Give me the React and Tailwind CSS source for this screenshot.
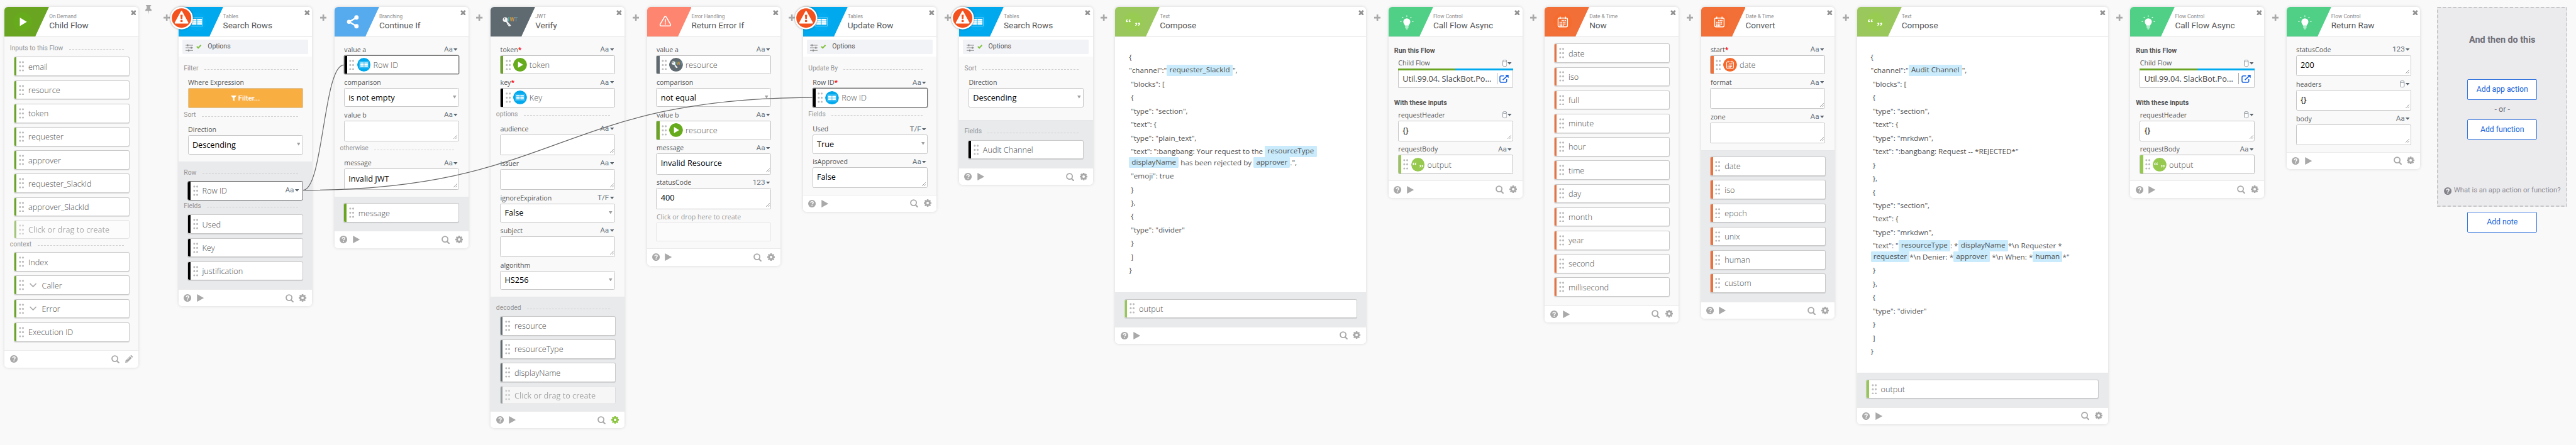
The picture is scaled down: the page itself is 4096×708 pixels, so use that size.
import React from "react";

const BAR = {
  green: "bg-[#6aa522]",
  black: "bg-black",
  slate: "bg-[#5f6a70]",
  lime: "bg-[#95c950]",
  orange: "bg-[#f27038]",
};

/* ---------- small icons ---------- */

function Dots({ className = "" }) {
  return (
    <svg viewBox="0 0 9 18" className={`h-[18px] w-[9px] shrink-0 fill-[#bcbcbc] ${className}`}>
      {[2, 9, 16].map((y) => (
        <React.Fragment key={y}>
          <circle cx="2" cy={y} r="1.65" />
          <circle cx="7" cy={y} r="1.65" />
        </React.Fragment>
      ))}
    </svg>
  );
}

function Help({ className = "h-[13px] w-[13px] text-[#a9a9a9]" }) {
  return (
    <svg viewBox="0 0 13 13" className={`shrink-0 ${className}`}>
      <circle cx="6.5" cy="6.5" r="6.5" fill="currentColor" />
      <path d="M4.4 5.1C4.5 3.7 5.4 3 6.6 3c1.2 0 2.1.7 2.1 1.8 0 1.5-2 1.5-2 3" fill="none" stroke="#fff" strokeWidth="1.5" />
      <rect x="5.8" y="8.9" width="1.7" height="1.7" fill="#fff" />
    </svg>
  );
}

function Play() {
  return (
    <svg viewBox="0 0 12 13" className="h-[13px] w-[12px] shrink-0 fill-[#a9a9a9]">
      <path d="M.3 0 12 6.5.3 13z" />
    </svg>
  );
}

function Search() {
  return (
    <svg viewBox="0 0 14 14" className="h-[14px] w-[14px] shrink-0" fill="none" stroke="#a9a9a9">
      <circle cx="6" cy="6" r="4.9" strokeWidth="1.9" />
      <path d="m9.6 9.8 3.2 3.3" strokeWidth="2.3" strokeLinecap="round" />
    </svg>
  );
}

function Gear({ active }) {
  return (
    <svg viewBox="-6.5 -6.5 13 13" className={`h-[13px] w-[13px] shrink-0 ${active ? "text-[#8ac43f]" : "text-[#a9a9a9]"}`}>
      <circle r="3.6" fill="none" stroke="currentColor" strokeWidth="2.9" />
      {[0, 45, 90, 135].map((a) => (
        <g key={a} transform={`rotate(${a})`} fill="currentColor">
          <rect x="-1.35" y="-6.5" width="2.7" height="3" />
          <rect x="-1.35" y="3.5" width="2.7" height="3" />
        </g>
      ))}
    </svg>
  );
}

function Pencil() {
  return (
    <svg viewBox="0 0 13 13" className="h-[13px] w-[13px] shrink-0 fill-[#a9a9a9]">
      <path d="M0 13l.8-3.9L8 1.9l3.1 3.1-7.2 7.2z" />
      <path d="M8.8 1.1 9.6.3c.4-.4.9-.4 1.3 0l1.8 1.8c.4.4.4.9 0 1.3l-.8.8z" />
      <path d="M1.6 9.6 3.4 11.4M3.2 8.4l5-5" stroke="#fff" strokeWidth=".8" fill="none" />
    </svg>
  );
}

function Close() {
  return (
    <svg viewBox="0 0 10 10" className="h-[9.4px] w-[9.4px] shrink-0" stroke="#919191" strokeWidth="3">
      <path d="m1.2 1.2 7.6 7.6M8.8 1.2 1.2 8.8" />
    </svg>
  );
}

function Plus() {
  return (
    <svg viewBox="0 0 11 11" className="h-[11px] w-[11px] shrink-0" stroke="#a9a9a9" strokeWidth="2.8">
      <path d="M5.5 0v11M0 5.5h11" />
    </svg>
  );
}

function Pin() {
  return (
    <svg viewBox="0 0 11 16" className="h-[16px] w-[11px] shrink-0 fill-[#a9a9a9]">
      <path d="M1.8 0h7.4c.6 0 .9.4.9.8s-.3.8-.9.8h-.7v4.3C10 6.6 11 7.9 11 9.8H6.2L5.5 16l-.7-6.2H0c0-1.9 1-3.2 2.5-3.9V1.6h-.7c-.6 0-.9-.4-.9-.8s.3-.8.9-.8z" />
    </svg>
  );
}

function Sliders() {
  return (
    <svg viewBox="0 0 13 13" className="h-[13px] w-[13px] shrink-0 fill-[#8c8c8c]">
      <path d="M0 1.7h13v1H0zM0 6h13v1H0zM0 10.5h13v1H0z" />
      <path d="M2.5.6h2.2v3.2H2.5zM8.8 4.900H11v3.200H8.800zM4.300 9.400h2.200v3.200H4.300z" />
    </svg>
  );
}

function Check() {
  return (
    <svg viewBox="0 0 9 7" className="h-[7px] w-[9px] shrink-0" fill="none" stroke="#83c341" strokeWidth="2.2">
      <path d="m.9 3.3 2.5 2.3L8.1.9" />
    </svg>
  );
}

function Caret() {
  return (
    <svg viewBox="0 0 7 4" className="h-[4px] w-[7px] shrink-0 fill-[#59626b]">
      <path d="M0 0h7L3.5 4z" />
    </svg>
  );
}

function WarningBadge() {
  return (
    <svg viewBox="0 0 40 40" className="absolute -top-[0.5px] -left-[14.5px] z-10 h-[40px] w-[40px] drop-shadow-[0_1px_1.5px_rgba(0,0,0,0.4)]">
      <circle cx="20" cy="20" r="19.3" fill="#fff" />
      <circle cx="20" cy="20" r="16.6" fill="#f3511d" />
      <path d="M20 8.9 30.7 28.3H9.3z" fill="#fff" stroke="#fff" strokeWidth="2.2" strokeLinejoin="round" />
      <path d="M18.1 14.5h3.8l-.6 7.6h-2.6z" fill="#f3511d" />
      <rect x="18.2" y="23.6" width="3.6" height="3.3" fill="#f3511d" />
    </svg>
  );
}

/* Glyphs are drawn around (0,0) so they serve both the header and the round chips. */
function Glyph({ kind }) {
  switch (kind) {
    case "play":
      return <path d="M-4.7-7.2 7.3 0-4.7 7.2z" fill="#fff" />;
    case "table":
      return (
        <g>
          <rect x="-10.2" y="-7.3" width="20.4" height="14.6" fill="none" stroke="#9adcf8" strokeWidth=".8" />
          {[-5.2, -1.6, 2].map((y) => (
            <g key={y} fill="#fff">
              <rect x="-8.8" y={y} width="8.3" height="2.9" />
              <rect x=".5" y={y} width="8.3" height="2.9" />
            </g>
          ))}
        </g>
      );
    case "share":
      return (
        <g fill="#fff" stroke="#fff">
          <path d="M6.5-7.5-6 0 6.5 7.5" fill="none" strokeWidth="2.6" />
          <circle cx="-6.5" cy="0" r="3.4" strokeWidth="0" />
          <circle cx="6.3" cy="-7.5" r="3.7" strokeWidth="0" />
          <circle cx="6.3" cy="7.5" r="3.7" strokeWidth="0" />
        </g>
      );
    case "jwt":
      return (
        <g>
          <text x="-4" y="-.5" fontSize="9.5" fontWeight="500" fontFamily="Roboto, sans-serif">
            <tspan fill="#3fc6c0">J</tspan>
            <tspan fill="#d99a45">W</tspan>
            <tspan fill="#5f9bb5">T</tspan>
          </text>
          <path d="M-5.5-2.5 3 7M-.8 2.7l-1.8 1.7M1.5 5.3-.3 7" stroke="#f3f3f3" strokeWidth="2.4" fill="none" />
          <circle cx="-6" cy="-3.8" r="4.1" fill="#f3f3f3" />
          <circle cx="-7.2" cy="-5" r="1.1" fill="#5f6a70" />
        </g>
      );
    case "alert":
      return (
        <g fill="none" stroke="#fff" strokeWidth="1.7" strokeLinejoin="round" strokeLinecap="round">
          <path d="M-1.6-8.2a1.9 1.9 0 0 1 3.2 0L8.8 4.2A1.9 1.9 0 0 1 7.2 7H-7.2a1.9 1.9 0 0 1-1.6-2.8z" />
          <path d="M0-4V.8" />
          <path d="M0 3.5v.1" strokeWidth="2" />
        </g>
      );
    case "quote":
      return (
        <g fill="#fff">
          {[-11, -6.2].map((x) => (
            <path key={x} transform={`translate(${x} -2.2) scale(.9)`} d="M1.8-3.1c-2 .5-3.6 2-3.6 4.1 0 1.300.8 2.100 1.900 2.100 1 0 1.800-.7 1.800-1.700s-.7-1.600-1.500-1.700c.1-.9.7-1.700 1.700-2.200z" />
          ))}
          {[5.2, 10].map((x) => (
            <path key={x} transform={`translate(${x} 4) rotate(180) scale(.9)`} d="M1.8-3.1c-2 .5-3.6 2-3.6 4.1 0 1.300.8 2.100 1.900 2.100 1 0 1.800-.7 1.800-1.700s-.7-1.600-1.500-1.700c.1-.9.7-1.700 1.700-2.200z" />
          ))}
        </g>
      );
    case "bulb":
      return (
        <g>
          <path d="M0-6a6 6 0 0 1 6 6c0 2.8-2.4 4-2.8 6.5h-6.4C-3.6 4-6 2.8-6 0a6 6 0 0 1 6-6z" fill="#fff" />
          <path d="M-2.8 8h5.6M-2.8 10h5.6M-1.5 12h3" stroke="#fff" strokeWidth="1.1" />
          <path d="M0-8.5V-11M6-6.5l1.8-1.8M-6-6.5l-1.8-1.8M9-.5h2.3M-9-.5h-2.3" stroke="#fff" strokeWidth="1.1" />
        </g>
      );
    case "calendar":
      return (
        <g fill="none" stroke="#fff">
          <rect x="-8" y="-6.5" width="16" height="15" rx="2" strokeWidth="1.5" />
          <path d="M-4.5-9v4M4.5-9v4" strokeWidth="1.6" />
          <path d="M-2-2.2h7.5M-5.5.8h11M-5.5 3.8h11M-5.5 6.200h7" strokeWidth="1.9" strokeDasharray="1.9 .8" />
        </g>
      );
    default:
      return null;
  }
}

const CHIP = {
  table: "#00a9ee",
  play: "#66ab1b",
  jwt: "#5f6a70",
  quote: "#96c94e",
  calendar: "#f4692b",
};

function Chip({ kind }) {
  return (
    <svg viewBox="-16 -16 32 32" className="h-[23.4px] w-[23.4px] shrink-0 overflow-hidden rounded-full">
      <circle r="16" fill={CHIP[kind]} />
      <Glyph kind={kind} />
    </svg>
  );
}

/* ---------- card parts ---------- */

const THEME = {
  play: ["#6aa522", "#66ab1b"],
  table: ["#00a8ee", "#03abf1"],
  share: ["#56abee", "#56abee"],
  jwt: ["#5f6a70", "#5f6a70"],
  alert: ["#fe8670", "#fe8670"],
  quote: ["#9bc85c", "#97cb52"],
  bulb: ["#4fd086", "#4fd086"],
  calendar: ["#f27038", "#f56c2e"],
};

function Card({ kind, app, title, warning, wide, footer = "full", gearActive, children }) {
  const [base, spot] = THEME[kind];
  return (
    <section
      className={`relative flex shrink-0 flex-col rounded-[6px] bg-[#f9f9f9] shadow-[0_0_6px_rgba(0,0,0,0.14)] ${
        wide ? "w-[427.8px]" : "w-[228px]"
      }`}
    >
      {warning && <WarningBadge />}
      <header className="flex h-[51.6px] shrink-0 rounded-t-[6px] border-b border-[#e4e4e4] bg-white">
        <svg viewBox="0 0 76 51" className="h-[51px] w-[76px] shrink-0 rounded-tl-[6px]">
          <path d="M0 0h76L53.5 48.5 52.5 51H0z" fill={base} />
          <circle cx="31" cy="25.5" r="16" fill={spot} />
          <g transform="translate(31 25.5)">
            <Glyph kind={kind} />
          </g>
        </svg>
        <div className="flex min-w-0 flex-1 flex-col whitespace-nowrap pt-[11.3px] font-['Roboto',sans-serif]">
          <span className="text-[8.95px] leading-[11px] text-[#8b8b8b]">{app}</span>
          <span className="text-[14.55px] leading-[17.5px] text-[#555]">{title}</span>
        </div>
        <div className="pt-[5px] pr-[4px]">
          <Close />
        </div>
      </header>
      {children}
      <footer className="flex h-[29.3px] shrink-0 items-center rounded-b-[6px] border-t border-[#eaeaea] bg-white pr-[9.5px] pl-[9px]">
        <Help />
        {footer === "full" && (
          <span className="ml-[9px]">
            <Play />
          </span>
        )}
        <span className="ml-auto">
          <Search />
        </span>
        <span className="-mt-[1px] ml-[9.5px]">{footer === "full" ? <Gear active={gearActive} /> : <Pencil />}</span>
      </footer>
    </section>
  );
}

function OptionsBar() {
  return (
    <div className="bg-white px-[6.8px] pt-[4.3px] pb-[4.3px]">
      <div className="flex h-[25.1px] items-center rounded-[2px] bg-[#f2f3f7] pl-[5.5px]">
        <span className="mt-[2px]">
          <Sliders />
        </span>
        <span className="ml-[5.5px]">
          <Check />
        </span>
        <span className="-mt-[1px] ml-[10px] font-['Roboto',sans-serif] text-[11.3px] text-[#555]">Options</span>
      </div>
    </div>
  );
}

function Section({ className = "mt-[1.6px] mb-[1.6px]", children }) {
  return (
    <div className={`flex h-[20px] items-center pr-[24.5px] pl-[9.2px] ${className}`}>
      <span className="font-['Roboto',sans-serif] text-[11.1px] whitespace-nowrap text-[#939393]">{children}</span>
      <span className="mt-[4.5px] ml-[10px] flex-1 border-t border-dashed border-[#cfcfcf]" />
    </div>
  );
}

function Type({ kind }) {
  if (kind === "obj") {
    return (
      <span className="flex items-center gap-[1.5px]">
        <svg viewBox="0 0 8 12" className="h-[12px] w-[8px]" fill="#fff" stroke="#8a929a" strokeWidth="1">
          <path d="M.6 2.3v7.6c0 .9 1.5 1.5 3.4 1.5s3.4-.6 3.4-1.5V2.3" />
          <ellipse cx="4" cy="2.2" rx="3.4" ry="1.6" />
        </svg>
        <Caret />
      </span>
    );
  }
  return (
    <span className="flex items-center gap-[1.5px] font-['Roboto',sans-serif] text-[12.6px] text-[#68737d]">
      {kind}
      <Caret />
    </span>
  );
}

function Label({ text, required, type, muted }) {
  return (
    <div className="flex h-[23px] items-center justify-between pt-[4.6px] pr-[2px] pl-[0.5px]">
      <span className={`font-['Open_Sans',sans-serif] text-[11.35px] leading-[18px] whitespace-nowrap ${muted ? "text-[#999]" : "text-[#555]"}`}>
        {text}
        {required && <span className="font-semibold text-[#f00]">*</span>}
      </span>
      {type && <Type kind={type} />}
    </div>
  );
}

const BOX = "rounded-[2.5px] border border-[#c6c6c6] bg-white";
const VALUE = "font-['Open_Sans',sans-serif] text-[13.63px] whitespace-nowrap text-black";

function SelectField({ label, type, value }) {
  return (
    <div className="mx-[16px]">
      <Label text={label} type={type} />
      <div className={`${BOX} flex h-[32.7px] items-center justify-between pr-[3.5px] pl-[6.7px]`}>
        <span className={VALUE}>{value}</span>
        <svg viewBox="0 0 6 5" className="-mt-[2px] h-[5px] w-[6px] fill-[#a0a0a0]">
          <path d="M0 0h6L3 5z" />
        </svg>
      </div>
    </div>
  );
}

function TextField({ label, type, value }) {
  return (
    <div className="mx-[16px]">
      <Label text={label} type={type} />
      <div className={`${BOX} flex h-[35.9px] items-end justify-between pr-[1.5px] pl-[6.7px]`}>
        <span className={`${VALUE} self-center pb-[2px]`}>{value}</span>
        <svg viewBox="0 0 7 7" className="mb-[3px] h-[6.5px] w-[6.5px]" stroke="#777" strokeWidth=".9">
          <path d="M.3 6.7 6.7.3M4 6.7l2.7-2.7" />
        </svg>
      </div>
    </div>
  );
}

function TokenField({ label, required, type, bar, chip, value, selected }) {
  return (
    <div className="mx-[16px]">
      <Label text={label} required={required} type={type} />
      <div
        className={`flex h-[33px] items-center overflow-hidden rounded-[2.5px] border bg-white ${
          selected ? "border-[#6e6e6e] ring-[0.5px] ring-[#8c8c8c]" : "border-[#bdbdbd]"
        }`}
      >
        <span className={`h-full w-[4.5px] shrink-0 ${BAR[bar]}`} />
        <Dots className="mr-[4px] ml-[3.6px]" />
        <Chip kind={chip} />
        <span className="ml-[4.5px] pt-[0.8px] font-['Open_Sans',sans-serif] text-[13.6px] font-light whitespace-nowrap text-[#4f4f4f]">{value}</span>
      </div>
    </div>
  );
}

function Pill({ bar, children, expandable, placeholder, selected }) {
  return (
    <div
      className={`mr-[15.5px] ml-[15.5px] flex shrink-0 items-center overflow-hidden rounded-[3px] border bg-white ${
        placeholder ? "-mt-[1px] h-[32px] border-[#d5d5d5] opacity-60" : "h-[32.9px]"
      } ${selected ? "border-[#666]" : placeholder ? "" : "border-[#c9c9c9] shadow-[0_0.5px_1px_rgba(0,0,0,0.12)]"}`}
    >
      <span className={`h-full w-[4px] shrink-0 ${BAR[bar]}`} />
      <Dots className="ml-[4px]" />
      {expandable && (
        <svg viewBox="0 0 12 8" className="ml-[9.5px] h-[8px] w-[12px]" fill="none" stroke="#aaa" strokeWidth="1.7">
          <path d="m.6 1 5.4 5.5L11.4 1" />
        </svg>
      )}
      <span
        className={`pt-[1px] font-['Open_Sans',sans-serif] text-[13.6px] whitespace-nowrap ${expandable ? "ml-[8.5px]" : "ml-[7px]"} ${
          placeholder ? "font-normal text-[#777]" : "font-light text-[#4a4a4a]"
        }`}
      >
        {children}
      </span>
      {selected && (
        <span className="mr-[6px] ml-auto">
          <Type kind="Aa" />
        </span>
      )}
    </div>
  );
}

function Pills({ bar, items }) {
  return (
    <div className="flex flex-col gap-[7px]">
      {items.map((t) => (
        <Pill key={t} bar={bar}>
          {t}
        </Pill>
      ))}
    </div>
  );
}

function Outputs({ className = "pt-[10.3px] pb-[14.4px]", children }) {
  return <div className={`border-t border-[#e6e7e9] bg-[#e9eaec] ${className}`}>{children}</div>;
}

function Body({ className = "pt-[7.7px] pb-[11.5px]", children }) {
  return <div className={className}>{children}</div>;
}

function Token({ children }) {
  return <span className="inline-block h-[18.7px] rounded-[1.5px] bg-[#c9ebfb] px-[4.5px] align-top leading-[17.7px]">{children}</span>;
}

function Editor({ className, lines }) {
  return (
    <div className={`bg-white pt-[24.6px] pl-[23.4px] font-['Open_Sans',sans-serif] text-[12.52px] leading-[18.7px] text-[#4f4f4f] ${className}`}>
      {lines.map((line, i) => (
        <p key={i} className="mb-[4.3px] whitespace-pre">
          {line}
        </p>
      ))}
    </div>
  );
}

function Gap({ pinned }) {
  return (
    <div className={`flex shrink-0 ${pinned ? "w-[68.3px] justify-between pl-[12px]" : "w-[38.1px] justify-center"}`}>
      {pinned && (
        <div className="-mt-[3px]">
          <Pin />
        </div>
      )}
      <div className={`pt-[12.5px] ${pinned ? "pr-[14px]" : ""}`}>
        <Plus />
      </div>
    </div>
  );
}

/* ---------- composed cards ---------- */

function AsyncCard() {
  return (
    <Card kind="bulb" app="Flow Control" title="Call Flow Async">
      <Body className="pt-[14px] pb-[11px]">
        <h3 className="h-[20px] pl-[9.5px] font-['Roboto',sans-serif] text-[11.5px] leading-[20px] font-bold text-[#555]">Run this Flow</h3>
        <div className="mx-[16px] -mt-[3px]">
          <Label text="Child Flow" type="obj" />
          <div className="flex h-[2.3px]">
            <span className="flex-1 bg-[#6aa522]" />
            <span className="flex-1 bg-[#00a8ee]" />
          </div>
          <div className="flex h-[30.2px] items-center rounded-b-[2.5px] border border-t-0 border-[#c6c6c6] bg-white pr-[6px] pl-[6.7px]">
            <span className="flex-1 font-['Open_Sans',sans-serif] text-[13.6px] whitespace-nowrap text-[#444]">Util.99.04. SlackBot.Po...</span>
            <span className="h-[19px] border-l border-[#aaa]" />
            <svg viewBox="0 0 16 14" className="ml-[4px] h-[14px] w-[16px]" fill="none" stroke="#1b66e0" strokeWidth="1.6">
              <path d="M8 2H3.5C2 2 1 3 1 4.3v6.2C1 12 2 13 3.5 13h6.6c1.5 0 2.5-1 2.5-2.5V7.5" />
              <path d="M6 8.8 13.5 2" strokeWidth="1.9" />
              <path d="M9.8 0h6v5.6z" fill="#1b66e0" stroke="none" />
            </svg>
          </div>
        </div>
        <h3 className="mt-[16.7px] h-[20px] pl-[9.5px] font-['Roboto',sans-serif] text-[11.5px] leading-[20px] font-bold text-[#555]">With these inputs</h3>
        <div className="-mt-[4.2px]">
          <TextField label="requestHeader" type="obj" value="{}" />
          <TokenField label="requestBody" type="Aa" bar="lime" chip="quote" value="output" />
        </div>
      </Body>
    </Card>
  );
}

function OutlineButton({ children, className = "" }) {
  return (
    <button
      className={`h-[35.3px] w-[118.5px] shrink-0 rounded-[2px] border border-[#3575de] bg-white font-['Roboto',sans-serif] text-[13.1px] text-[#1662dd] ${className}`}
    >
      {children}
    </button>
  );
}

function NextStep() {
  return (
    <div className="flex w-[222.3px] shrink-0 flex-col items-center font-['Roboto',sans-serif]">
      <div className="relative flex h-[340.7px] w-full flex-col items-center bg-[#ebebed]">
        <svg className="absolute inset-0 h-full w-full" fill="none">
          <rect x="1" y="1" width="220.3" height="338.7" stroke="#bcbcbe" strokeWidth="1.6" strokeDasharray="5.5 3.3" />
        </svg>
        <h2 className="mt-[47px] h-[20px] text-[15.4px] leading-[20px] font-bold text-[#6e6e78]">And then do this</h2>
        <OutlineButton className="mt-[56.5px]">Add app action</OutlineButton>
        <span className="flex h-[32.7px] items-center text-[13.5px] text-[#6e6e78]">- or -</span>
        <OutlineButton>Add function</OutlineButton>
        <div className="mt-auto mb-[18px] flex items-center gap-[4px] text-[12.03px] whitespace-nowrap text-[#8c8c96]">
          <Help className="h-[13px] w-[13px] text-[#85858d]" />
          What is an app action or function?
        </div>
      </div>
      <OutlineButton className="mt-[8.5px]">Add note</OutlineButton>
    </div>
  );
}

function Connectors() {
  return (
    <svg viewBox="0 0 4390 759" className="pointer-events-none absolute top-0 left-0 z-20 h-[759px] w-[4390px]" fill="none" stroke="#666" strokeWidth="1.3">
      <path d="M516.3 324.3C551 324.3 551 110.7 586 110.7" />
      <path d="M516.3 324.3C950.4 324.3 950.4 166.3 1384.5 166.3" />
    </svg>
  );
}

const MESSAGE_LINES = [
  "{",
  <>"channel":"<Token>requester_SlackId</Token>",</>,
  ' "blocks": [',
  " {",
  ' "type": "section",',
  ' "text": {',
  ' "type": "plain_text",',
  <>
    {' "text": ":bangbang: Your request to the '}
    <Token>resourceType</Token>
    <br />
    <Token>displayName</Token>
    {" has been rejected by "}
    <Token>approver</Token>
    {'.",'}
  </>,
  ' "emoji": true',
  " }",
  " },",
  " {",
  ' "type": "divider"',
  " }",
  " ]",
  "}",
];

const AUDIT_LINES = [
  "{",
  <>"channel":"<Token>Audit Channel</Token>",</>,
  ' "blocks": [',
  " {",
  ' "type": "section",',
  ' "text": {',
  ' "type": "mrkdwn",',
  ' "text": ":bangbang: Request -- *REJECTED*"',
  " }",
  " },",
  " {",
  ' "type": "section",',
  ' "text": {',
  ' "type": "mrkdwn",',
  <>
    {' "text": "'}
    <Token>resourceType</Token>
    {": *"}
    <Token>displayName</Token>
    {"*\\n Requester *"}
    <br />
    <Token>requester</Token>
    {"*\\n Denier: *"}
    <Token>approver</Token>
    {" *\\n When: *"}
    <Token>human</Token>
    {'*"'}
  </>,
  " }",
  " },",
  " {",
  ' "type": "divider"',
  " }",
  " ]",
  "}",
];

export default function App() {
  return (
    <div className="h-screen w-screen overflow-hidden bg-[#f9f9f9]">
      <main className="relative flex h-[759px] w-[4390px] items-start overflow-hidden bg-[#f9f9f9] pt-[11.7px] pl-[7.8px] [zoom:0.93303]">
        <Card kind="play" app="On Demand" title="Child Flow" footer="edit">
          <Body className="pb-[14.8px]">
            <Section className="mt-[9px] mb-[4.7px]">Inputs to this Flow</Section>
            <div className="flex flex-col gap-[7px]">
              {["email", "resource", "token", "requester", "approver", "requester_SlackId", "approver_SlackId"].map((t) => (
                <Pill key={t} bar="green">
                  {t}
                </Pill>
              ))}
              <Pill bar="green" placeholder>
                Click or drag to create
              </Pill>
            </div>
            <Section className="-mt-[0.6px] mb-[3.6px]">context</Section>
            <div className="flex flex-col gap-[7px]">
              <Pill bar="green">Index</Pill>
              <Pill bar="green" expandable>
                Caller
              </Pill>
              <Pill bar="green" expandable>
                Error
              </Pill>
              <Pill bar="green">Execution ID</Pill>
            </div>
          </Body>
        </Card>
        <Gap pinned />

        <Card kind="table" app="Tables" title="Search Rows" warning>
          <OptionsBar />
          <Body className="pt-[9.3px] pb-[12px]">
            <Section className="mb-[1px]">Filter</Section>
            <div className="mx-[16px]">
              <Label text="Where Expression" />
              <div className="flex h-[34.3px] items-center justify-center gap-[3px] rounded-[2px] border border-[#d9c7a5] bg-[#f9ae42] font-['Roboto',sans-serif] text-[12.2px] font-medium text-white">
                <svg viewBox="0 0 10 10" className="mt-[2px] h-[10px] w-[10px] fill-white">
                  <path d="M0 0h10L6.2 4.3V10L3.8 8V4.3z" />
                </svg>
                Filter...
              </div>
            </div>
            <Section>Sort</Section>
            <SelectField label="Direction" value="Descending" />
          </Body>
          <Outputs className="pt-[8px] pb-[14.6px]">
            <Section className="mb-[4.2px]">Row</Section>
            <Pill bar="black" selected>
              Row ID
            </Pill>
            <Section className="-mt-[0.3px] mb-[4.7px]">Fields</Section>
            <Pills bar="black" items={["Used", "Key", "justification"]} />
          </Outputs>
        </Card>
        <Gap />

        <Card kind="share" app="Branching" title="Continue If">
          <Body>
            <TokenField label="value a" type="Aa" bar="black" chip="table" value="Row ID" selected />
            <SelectField label="comparison" value="is not empty" />
            <TextField label="value b" type="Aa" />
            <Section>otherwise</Section>
            <TextField label="message" type="Aa" value="Invalid JWT" />
          </Body>
          <Outputs>
            <Pill bar="green">message</Pill>
          </Outputs>
        </Card>
        <Gap />

        <Card kind="jwt" app="JWT" title="Verify" gearActive>
          <Body>
            <TokenField label="token" required type="Aa" bar="green" chip="play" value="token" />
            <TokenField label="key" required type="Aa" bar="black" chip="table" value="Key" />
            <Section>options</Section>
            <TextField label="audience" type="Aa" />
            <TextField label="issuer" type="Aa" />
            <SelectField label="ignoreExpiration" type="T/F" value="False" />
            <TextField label="subject" type="Aa" />
            <SelectField label="algorithm" value="HS256" />
          </Body>
          <Outputs className="pt-[8px] pb-[11.3px]">
            <Section className="mb-[4.4px]">decoded</Section>
            <div className="flex flex-col gap-[7px]">
              <Pill bar="slate">resource</Pill>
              <Pill bar="slate">resourceType</Pill>
              <Pill bar="slate">displayName</Pill>
              <Pill bar="slate" placeholder>
                Click or drag to create
              </Pill>
            </div>
          </Outputs>
        </Card>
        <Gap />

        <Card kind="alert" app="Error Handling" title="Return Error If">
          <Body>
            <TokenField label="value a" type="Aa" bar="slate" chip="jwt" value="resource" />
            <SelectField label="comparison" value="not equal" />
            <TokenField label="value b" type="Aa" bar="green" chip="play" value="resource" />
            <TextField label="message" type="Aa" value="Invalid Resource" />
            <TextField label="statusCode" type="123" value="400" />
            <div className="mx-[16px]">
              <Label text="Click or drop here to create" muted />
              <div className="h-[32.7px] rounded-[2px] border border-[#e6e6e6] bg-[#fbfbfb]" />
            </div>
          </Body>
        </Card>
        <Gap />

        <Card kind="table" app="Tables" title="Update Row" warning>
          <OptionsBar />
          <Body className="pt-[9.3px] pb-[11px]">
            <Section className="mb-[1px]">Update By</Section>
            <TokenField label="Row ID" required type="Aa" bar="black" chip="table" value="Row ID" selected />
            <Section>Fields</Section>
            <SelectField label="Used" type="T/F" value="True" />
            <TextField label="isApproved" type="Aa" value="False" />
          </Body>
        </Card>
        <Gap />

        <Card kind="table" app="Tables" title="Search Rows" warning>
          <OptionsBar />
          <Body className="pt-[9.3px] pb-[22px]">
            <Section className="mb-[1px]">Sort</Section>
            <SelectField label="Direction" value="Descending" />
          </Body>
          <Outputs className="pt-[8px] pb-[14.6px]">
            <Section className="mb-[4.8px]">Fields</Section>
            <Pills bar="black" items={["Audit Channel"]} />
          </Outputs>
        </Card>
        <Gap />

        <Card kind="quote" app="Text" title="Compose" wide>
          <Editor className="h-[435px]" lines={MESSAGE_LINES} />
          <Outputs>
            <Pill bar="lime">output</Pill>
          </Outputs>
        </Card>
        <Gap />

        <AsyncCard />
        <Gap />

        <Card kind="calendar" app="Date & Time" title="Now">
          <Body className="pt-[11px] pb-[14.8px]">
            <Pills
              bar="orange"
              items={["date", "iso", "full", "minute", "hour", "time", "day", "month", "year", "second", "millisecond"]}
            />
          </Body>
        </Card>
        <Gap />

        <Card kind="calendar" app="Date & Time" title="Convert">
          <Body>
            <TokenField label="start" required type="Aa" bar="orange" chip="calendar" value="date" />
            <TextField label="format" type="Aa" />
            <TextField label="zone" type="Aa" />
          </Body>
          <Outputs className="pt-[9.8px] pb-[15px]">
            <Pills bar="orange" items={["date", "iso", "epoch", "unix", "human", "custom"]} />
          </Outputs>
        </Card>
        <Gap />

        <Card kind="quote" app="Text" title="Compose" wide>
          <Editor className="h-[572.4px]" lines={AUDIT_LINES} />
          <Outputs>
            <Pill bar="lime">output</Pill>
          </Outputs>
        </Card>
        <Gap />

        <AsyncCard />
        <Gap />

        <Card kind="bulb" app="Flow Control" title="Return Raw">
          <Body className="pt-[7.7px] pb-[11.3px]">
            <TextField label="statusCode" type="123" value="200" />
            <TextField label="headers" type="obj" value="{}" />
            <TextField label="body" type="Aa" />
          </Body>
        </Card>

        <div className="w-[28.5px] shrink-0" />
        <NextStep />
        <Connectors />
      </main>
    </div>
  );
}
